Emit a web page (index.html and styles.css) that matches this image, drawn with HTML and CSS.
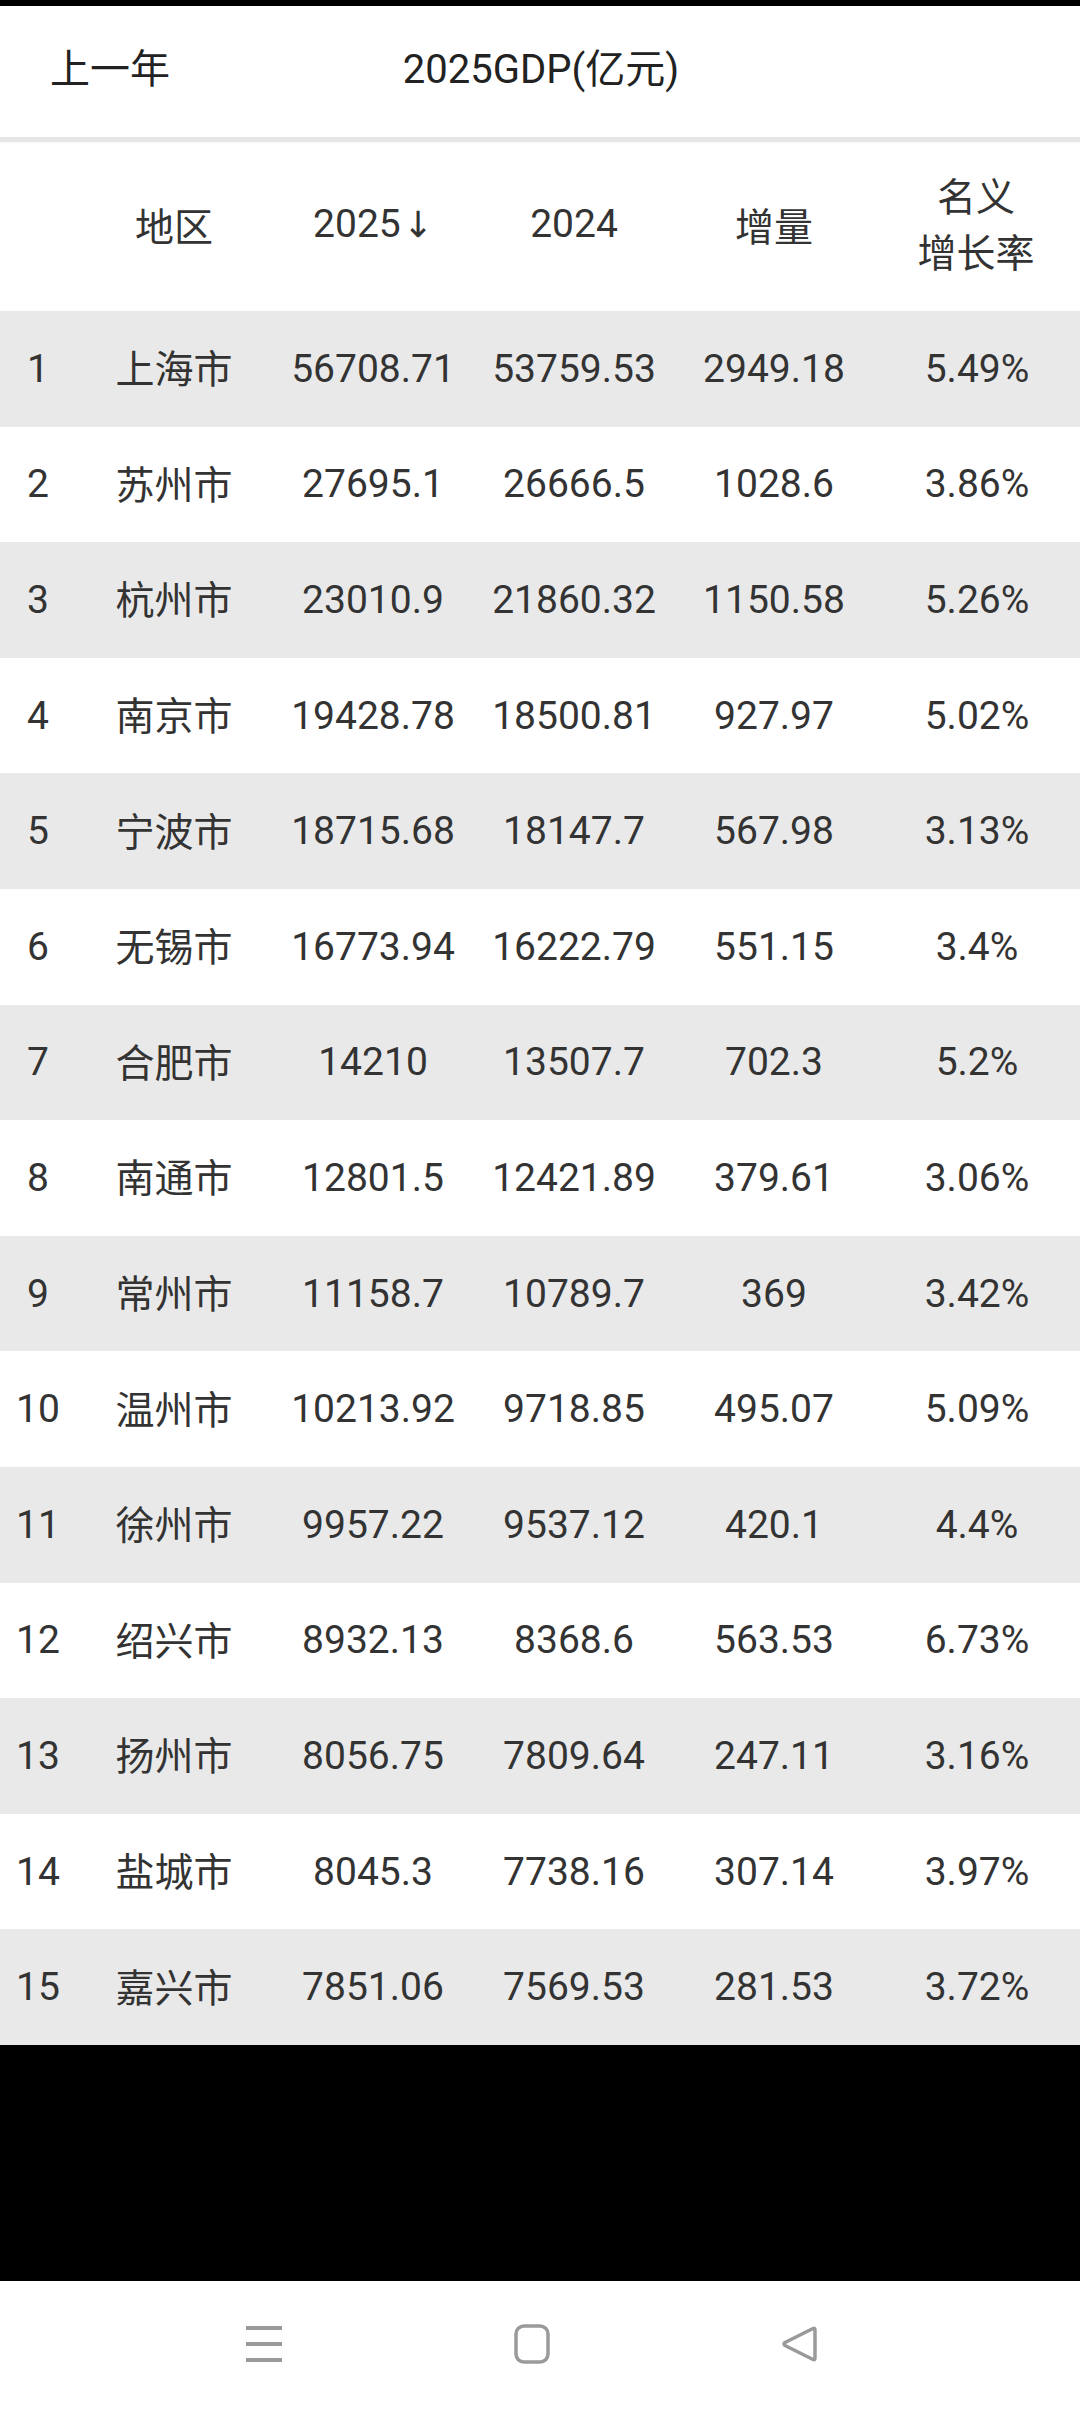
FILE: index.html
```html
<!DOCTYPE html>
<html lang="zh-CN">
<head>
<meta charset="utf-8">
<title>2025GDP</title>
<link rel="stylesheet" href="styles.css">
</head>
<body>
<div class="screen">
  <div class="status"></div>
  <header class="titlebar">
    <div class="back">上一年</div>
    <div class="title">2025GDP(亿元)</div>
    <div class="spacer"></div>
  </header>
  <div class="divider"></div>
  <div class="table">
    <div class="thead">
      <div class="c"></div>
      <div class="c">地区</div>
      <div class="c">2025<span class="arrow">↓</span></div>
      <div class="c">2024</div>
      <div class="c">增量</div>
      <div class="c two">名义<br>增长率</div>
    </div>
    <div class="row odd"><div class="c">1</div><div class="c city">上海市</div><div class="c">56708.71</div><div class="c">53759.53</div><div class="c">2949.18</div><div class="c">5.49%</div></div>
    <div class="row"><div class="c">2</div><div class="c city">苏州市</div><div class="c">27695.1</div><div class="c">26666.5</div><div class="c">1028.6</div><div class="c">3.86%</div></div>
    <div class="row odd"><div class="c">3</div><div class="c city">杭州市</div><div class="c">23010.9</div><div class="c">21860.32</div><div class="c">1150.58</div><div class="c">5.26%</div></div>
    <div class="row"><div class="c">4</div><div class="c city">南京市</div><div class="c">19428.78</div><div class="c">18500.81</div><div class="c">927.97</div><div class="c">5.02%</div></div>
    <div class="row odd"><div class="c">5</div><div class="c city">宁波市</div><div class="c">18715.68</div><div class="c">18147.7</div><div class="c">567.98</div><div class="c">3.13%</div></div>
    <div class="row"><div class="c">6</div><div class="c city">无锡市</div><div class="c">16773.94</div><div class="c">16222.79</div><div class="c">551.15</div><div class="c">3.4%</div></div>
    <div class="row odd"><div class="c">7</div><div class="c city">合肥市</div><div class="c">14210</div><div class="c">13507.7</div><div class="c">702.3</div><div class="c">5.2%</div></div>
    <div class="row"><div class="c">8</div><div class="c city">南通市</div><div class="c">12801.5</div><div class="c">12421.89</div><div class="c">379.61</div><div class="c">3.06%</div></div>
    <div class="row odd"><div class="c">9</div><div class="c city">常州市</div><div class="c">11158.7</div><div class="c">10789.7</div><div class="c">369</div><div class="c">3.42%</div></div>
    <div class="row"><div class="c">10</div><div class="c city">温州市</div><div class="c">10213.92</div><div class="c">9718.85</div><div class="c">495.07</div><div class="c">5.09%</div></div>
    <div class="row odd"><div class="c">11</div><div class="c city">徐州市</div><div class="c">9957.22</div><div class="c">9537.12</div><div class="c">420.1</div><div class="c">4.4%</div></div>
    <div class="row"><div class="c">12</div><div class="c city">绍兴市</div><div class="c">8932.13</div><div class="c">8368.6</div><div class="c">563.53</div><div class="c">6.73%</div></div>
    <div class="row odd"><div class="c">13</div><div class="c city">扬州市</div><div class="c">8056.75</div><div class="c">7809.64</div><div class="c">247.11</div><div class="c">3.16%</div></div>
    <div class="row"><div class="c">14</div><div class="c city">盐城市</div><div class="c">8045.3</div><div class="c">7738.16</div><div class="c">307.14</div><div class="c">3.97%</div></div>
    <div class="row odd"><div class="c">15</div><div class="c city">嘉兴市</div><div class="c">7851.06</div><div class="c">7569.53</div><div class="c">281.53</div><div class="c">3.72%</div></div>
  </div>
  <div class="blackout"></div>
  <nav class="navbar">
    <svg class="nav-icon" width="40" height="40" viewBox="0 0 40 40">
      <path d="M2 4H38M2 20H38M2 36H38" fill="none" stroke="#9a9a9a" stroke-width="4"/>
    </svg>
    <svg class="nav-icon" width="40" height="40" viewBox="0 0 40 40">
      <rect x="4" y="2" width="32" height="36" rx="8" ry="8" fill="none" stroke="#9a9a9a" stroke-width="3.5"/>
    </svg>
    <svg class="nav-icon" width="40" height="40" viewBox="0 0 40 40">
      <path d="M33 4.5 Q35 3.5 35 6 V34 Q35 36.5 33 35.5 L5 21.5 Q3 20 5 18.5 Z" fill="none" stroke="#9a9a9a" stroke-width="3.5" stroke-linejoin="round"/>
    </svg>
  </nav>
</div>
</body>
</html>
```

FILE: styles.css
```css
* {
  box-sizing: border-box;
}

html, body {
  margin: 0;
  padding: 0;
  background: #ffffff;
}

body {
  font-family: Roboto, "Noto Sans CJK SC", sans-serif;
  color: #2e2e2e;
}

.screen {
  width: 1080px;
  height: 2412px;
  display: flex;
  flex-direction: column;
  overflow: hidden;
}

.status {
  height: 6px;
  background: #000;
  flex: none;
}

.titlebar {
  height: 131px;
  flex: none;
  display: grid;
  grid-template-columns: 1fr auto 1fr;
  align-items: center;
  padding-bottom: 12px;
  font-size: 40px;
  color: #222;
}

.back {
  padding-left: 50px;
}

.title {
  text-align: center;
  padding-left: 2px;
}

.divider {
  height: 5px;
  flex: none;
  background: #e6e6e6;
  box-shadow: 0 1px 2px rgba(0, 0, 0, 0.04);
}

.table {
  flex: none;
  display: flex;
  flex-direction: column;
}

.thead,
.row {
  display: grid;
  grid-template-columns: 76px 196px 202px 200px 200px 206px;
  align-items: center;
}

.thead {
  height: 169px;
  padding-bottom: 6px;
  font-size: 39px;
  color: #333;
}

.row {
  height: 115.6px;
  font-size: 39px;
  color: #333;
  background: #ffffff;
}

.row.odd {
  background: #e9e9e9;
}

.c {
  text-align: center;
  white-space: nowrap;
}

.c.city {
  padding-bottom: 5px;
}

.c.two {
  line-height: 56px;
  padding-right: 2px;
  padding-top: 4px;
}

.arrow {
  font-family: "DejaVu Sans", sans-serif;
  font-size: 36px;
  margin-left: 2px;
}

.blackout {
  height: 236px;
  flex: none;
  background: #000;
}

.navbar {
  flex: 1;
  display: flex;
  align-items: center;
  justify-content: center;
  gap: 228px;
  padding-bottom: 4px;
  padding-right: 16px;
}

.nav-icon {
  display: block;
}
```
